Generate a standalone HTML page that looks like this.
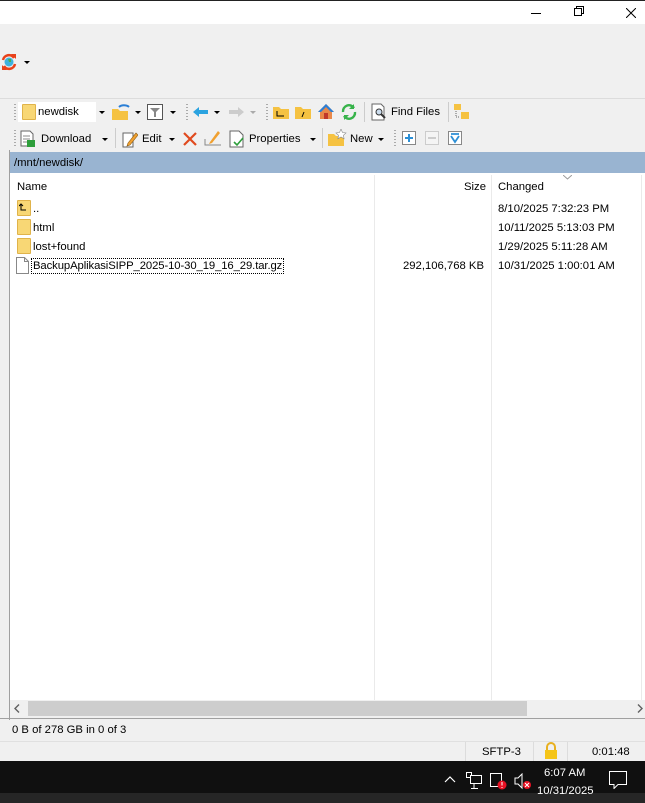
<!DOCTYPE html>
<html><head><meta charset="utf-8"><style>
*{margin:0;padding:0;box-sizing:border-box}
body{width:645px;height:803px;overflow:hidden;background:#f0f0f0;font-family:"Liberation Sans",sans-serif;font-size:11.3px;color:#000;position:relative}
.a{position:absolute}
.t{position:absolute;white-space:nowrap;line-height:14px}
.fold{position:absolute;width:14px;height:16px;background:#f8d775;border:1px solid #e0b34a;border-radius:1px}
.dd{position:absolute;width:0;height:0;border-left:3px solid transparent;border-right:3px solid transparent;border-top:3px solid #000}
.grip{position:absolute;width:2px;background:repeating-linear-gradient(#aaa 0 1px,transparent 1px 3px)}
.sep{position:absolute;width:1px;background:#ccc}
</style></head><body>
<div class="a" style="left:0;top:0;width:645px;height:1px;background:#222"></div>
<div class="a" style="left:0;top:1px;width:645px;height:23px;background:#fff"></div>
<div class="a" style="left:531px;top:13px;width:10px;height:1px;background:#000"></div>
<svg class="a" style="left:574px;top:6px" width="11" height="11"><rect x="0.5" y="2.5" width="7" height="7" fill="#fff" stroke="#000"/><path d="M2.5 2.5V0.5H9.5V7.5H7.5" fill="none" stroke="#000"/></svg>
<svg class="a" style="left:626px;top:8px" width="10" height="10"><path d="M0 0L10 10M10 0L0 10" stroke="#000"/></svg>
<svg class="a" style="left:0px;top:53px" width="18" height="18"><circle cx="9" cy="9" r="4.5" fill="#3db3e0"/><path d="M8 6h3v3h-2z" fill="#4caf50"/><path d="M3 7A6 6 0 0 1 14 5" fill="none" stroke="#e8421b" stroke-width="2.5"/><path d="M15 11A6 6 0 0 1 4 13" fill="none" stroke="#e8421b" stroke-width="2.5"/><path d="M11 1h5v5z M7 17H2v-5z" fill="#e8421b"/></svg>
<div class="dd" style="left:24px;top:61px"></div>
<div class="a" style="left:0;top:98px;width:645px;height:1px;background:#dcdcdc"></div>
<div class="grip" style="left:14px;top:104px;height:16px"></div>
<div class="a" style="left:18px;top:102px;width:90px;height:20px;background:#fff"></div>
<div class="a" style="left:96px;top:102px;width:12px;height:20px;background:#f0f0f0"></div>
<div class="fold" style="left:22px;top:104px"></div>
<div class="t" style="left:38px;top:105px">newdisk</div>
<div class="dd" style="left:99px;top:111px"></div>
<svg class="a" style="left:111px;top:103px" width="20" height="18"><path d="M1 6h6l2 2h8v9H1z" fill="#f5c242"/><path d="M8 4A6 4 0 0 1 18 4" fill="none" stroke="#2b7fd6" stroke-width="2"/></svg>
<div class="dd" style="left:135px;top:111px"></div>
<svg class="a" style="left:147px;top:104px" width="16" height="16"><rect x="0.5" y="0.5" width="15" height="15" fill="#fff" stroke="#555"/><path d="M3 4h10l-4 4v5h-2v-5z" fill="#888"/></svg>
<div class="dd" style="left:170px;top:111px"></div>
<div class="grip" style="left:186px;top:104px;height:16px"></div>
<svg class="a" style="left:193px;top:106px" width="16" height="12"><path d="M0 6l6-5v3h9v4H6v3z" fill="#2ba3e0"/></svg>
<div class="dd" style="left:214px;top:111px"></div>
<svg class="a" style="left:228px;top:106px" width="16" height="12"><path d="M16 6l-6-5v3H1v4h9v3z" fill="#ccc"/></svg>
<div class="dd" style="left:250px;top:111px;border-top-color:#aaa"></div>
<div class="grip" style="left:266px;top:104px;height:16px"></div>
<svg class="a" style="left:272px;top:104px" width="18" height="16"><path d="M1 3h6l2 2h8v10H1z" fill="#f5c242"/><path d="M5 7v5h7" fill="none" stroke="#000"/></svg>
<svg class="a" style="left:294px;top:104px" width="18" height="16"><path d="M1 3h6l2 2h8v10H1z" fill="#f5c242"/><path d="M8 13l2-5" stroke="#000"/></svg>
<svg class="a" style="left:317px;top:103px" width="18" height="17"><path d="M9 1L1 9h2v7h12V9h2z" fill="#e8884a"/><path d="M9 1L1 9h3l5-5 5 5h3z" fill="#2b7fd6"/><rect x="7" y="10" width="4" height="6" fill="#c0392b"/></svg>
<svg class="a" style="left:340px;top:103px" width="18" height="18"><path d="M3 9A6 6 0 0 1 14 5M15 9A6 6 0 0 1 4 13" fill="none" stroke="#37b34a" stroke-width="2.4"/><path d="M14 1v5h-5z" fill="#37b34a"/><path d="M4 17v-5h5z" fill="#37b34a"/></svg>
<div class="sep" style="left:364px;top:102px;height:20px"></div>
<svg class="a" style="left:371px;top:103px" width="16" height="18"><path d="M1 1h9l3 3v13H1z" fill="#fff" stroke="#666"/><circle cx="8" cy="9" r="3" fill="#cde" stroke="#333"/><path d="M10 11l4 4" stroke="#333" stroke-width="2"/></svg>
<div class="t" style="left:391px;top:105px">Find Files</div>
<div class="sep" style="left:448px;top:102px;height:20px"></div>
<svg class="a" style="left:453px;top:103px" width="18" height="18"><rect x="1" y="1" width="7" height="6" fill="#f5c242"/><rect x="8" y="9" width="8" height="7" fill="#f5c242"/><path d="M3 8v6h4" fill="none" stroke="#666" stroke-dasharray="1 1"/></svg>
<div class="grip" style="left:14px;top:130px;height:16px"></div>
<svg class="a" style="left:19px;top:130px" width="18" height="18"><path d="M2 1h9l3 3v12H2z" fill="#fff" stroke="#666"/><path d="M4 6h7M4 9h7M4 12h4" stroke="#888"/><rect x="8" y="10" width="8" height="7" fill="#2e9e3b"/></svg>
<div class="t" style="left:41px;top:132px">Download</div>
<div class="dd" style="left:102px;top:138px"></div>
<div class="sep" style="left:115px;top:128px;height:20px"></div>
<svg class="a" style="left:122px;top:130px" width="16" height="18"><path d="M1 3h10v14H1z" fill="#fff" stroke="#666"/><path d="M6 13l8-10 2 2-8 10-3 1z" fill="#f0a030" stroke="#8a5a10" stroke-width="0.6"/></svg>
<div class="t" style="left:142px;top:132px">Edit</div>
<div class="dd" style="left:169px;top:138px"></div>
<svg class="a" style="left:183px;top:132px" width="14" height="14"><path d="M1 1l12 12M13 1L1 13" stroke="#e04a1e" stroke-width="2.2"/></svg>
<svg class="a" style="left:204px;top:129px" width="18" height="18"><path d="M1 10v6h16" fill="none" stroke="#888"/><path d="M6 13l8-11 2 2-8 10-3 1z" fill="#f0a030"/></svg>
<svg class="a" style="left:229px;top:130px" width="16" height="18"><path d="M1 1h9l4 4v12H1z" fill="#fff" stroke="#666"/><path d="M5 12l3 3 6-7" fill="none" stroke="#2e9e3b" stroke-width="1.6"/></svg>
<div class="t" style="left:249px;top:132px">Properties</div>
<div class="dd" style="left:310px;top:138px"></div>
<div class="sep" style="left:322px;top:128px;height:20px"></div>
<svg class="a" style="left:327px;top:129px" width="20" height="18"><path d="M1 5h6l2 2h8v10H1z" fill="#f5c242"/><path d="M14 0l1.5 3.5 3.5.5-2.6 2.3.7 3.5-3.1-1.8-3.1 1.8.7-3.5L9 4l3.5-.5z" fill="#fff" stroke="#888" stroke-width="0.6"/></svg>
<div class="t" style="left:350px;top:132px">New</div>
<div class="dd" style="left:378px;top:138px"></div>
<div class="grip" style="left:394px;top:130px;height:16px"></div>
<svg class="a" style="left:402px;top:131px" width="14" height="14"><rect x="0.5" y="0.5" width="13" height="13" fill="#fff" stroke="#888"/><path d="M7 3v8M3 7h8" stroke="#2b8fd6" stroke-width="2"/></svg>
<svg class="a" style="left:425px;top:131px" width="14" height="14"><rect x="0.5" y="0.5" width="13" height="13" fill="#f4f4f4" stroke="#ccc"/><path d="M3 7h8" stroke="#ccc" stroke-width="2"/></svg>
<svg class="a" style="left:448px;top:131px" width="14" height="14"><rect x="0.5" y="0.5" width="13" height="13" fill="#fff" stroke="#888"/><path d="M3 3h8M3 5l4 6 4-6" fill="none" stroke="#2b8fd6" stroke-width="1.8"/></svg>
<div class="a" style="left:9px;top:150px;width:1px;height:570px;background:#a0a0a0"></div>
<div class="a" style="left:10px;top:152px;width:635px;height:21px;background:#99b4d1"></div>
<div class="t" style="left:14px;top:156px">/mnt/newdisk/</div>
<div class="a" style="left:10px;top:173px;width:635px;height:527px;background:#fff"></div>
<div class="a" style="left:374px;top:175px;width:1px;height:525px;background:#eaeaea"></div>
<div class="a" style="left:491px;top:175px;width:1px;height:525px;background:#eaeaea"></div>
<div class="a" style="left:641px;top:175px;width:1px;height:525px;background:#eaeaea"></div>
<div class="t" style="left:17px;top:180px">Name</div>
<div class="t" style="right:159px;top:180px">Size</div>
<div class="t" style="left:498px;top:180px">Changed</div>
<svg class="a" style="left:563px;top:175px" width="9" height="5"><path d="M0 0l4.5 4 4.5-4" fill="none" stroke="#999"/></svg>
<div class="fold" style="left:17px;top:200px"></div>
<svg class="a" style="left:19px;top:203px" width="8" height="9"><path d="M2 1v6h5M0 3l2-2 2 2" fill="none" stroke="#000"/></svg>
<div class="t" style="left:33px;top:202px">..</div>
<div class="t" style="left:498px;top:202px">8/10/2025 7:32:23 PM</div>
<div class="fold" style="left:17px;top:219px"></div>
<div class="t" style="left:33px;top:221px">html</div>
<div class="t" style="left:498px;top:221px">10/11/2025 5:13:03 PM</div>
<div class="fold" style="left:17px;top:238px"></div>
<div class="t" style="left:33px;top:240px">lost+found</div>
<div class="t" style="left:498px;top:240px">1/29/2025 5:11:28 AM</div>
<svg class="a" style="left:16px;top:257px" width="13" height="17"><path d="M0.5 0.5h8l4 4v12H0.5z" fill="#fff" stroke="#888"/><path d="M8.5 0.5v4h4" fill="none" stroke="#888"/></svg>
<div class="t" style="left:31px;top:258px;border:1px dotted #000;padding:0 1px;letter-spacing:-0.1px">BackupAplikasiSIPP_2025-10-30_19_16_29.tar.gz</div>
<div class="t" style="right:161px;top:259px">292,106,768 KB</div>
<div class="t" style="left:498px;top:259px">10/31/2025 1:00:01 AM</div>
<div class="a" style="left:10px;top:700px;width:635px;height:17px;background:#f0f0f0"></div>
<div class="a" style="left:28px;top:701px;width:499px;height:15px;background:#cdcdcd"></div>
<svg class="a" style="left:14px;top:704px" width="6" height="9"><path d="M5 0.5L1 4.5l4 4" fill="none" stroke="#606060" stroke-width="1.4"/></svg>
<svg class="a" style="left:637px;top:704px" width="6" height="9"><path d="M1 0.5l4 4-4 4" fill="none" stroke="#606060" stroke-width="1.4"/></svg>
<div class="a" style="left:0;top:718px;width:645px;height:1px;background:#a0a0a0"></div>
<div class="t" style="left:12px;top:723px">0 B of 278 GB in 0 of 3</div>
<div class="a" style="left:0;top:741px;width:645px;height:1px;background:#e0e0e0"></div>
<div class="a" style="left:465px;top:742px;width:1px;height:19px;background:#dcdcdc"></div>
<div class="a" style="left:533px;top:742px;width:1px;height:19px;background:#dcdcdc"></div>
<div class="a" style="left:567px;top:742px;width:1px;height:19px;background:#dcdcdc"></div>
<div class="t" style="left:482px;top:745px">SFTP-3</div>
<svg class="a" style="left:543px;top:742px" width="16" height="18"><path d="M4 8V5a4 4 0 0 1 8 0v3" fill="none" stroke="#e8b020" stroke-width="2"/><rect x="2" y="8" width="12" height="9" fill="#f5c518"/></svg>
<div class="t" style="left:592px;top:745px">0:01:48</div>
<div class="a" style="left:0;top:761px;width:645px;height:42px;background:#101010"></div>
<div class="a" style="left:0;top:793px;width:645px;height:10px;background:#262626"></div>
<svg class="a" style="left:444px;top:775px" width="12" height="8"><path d="M1 7l5-5 5 5" fill="none" stroke="#fff" stroke-width="1.2"/></svg>
<svg class="a" style="left:466px;top:772px" width="16" height="17"><rect x="0.5" y="0.5" width="5" height="5" fill="none" stroke="#fff"/><rect x="4.5" y="3.5" width="11" height="8" fill="#101010" stroke="#fff"/><path d="M8 12v4M5 16.5h7" stroke="#fff"/></svg>
<svg class="a" style="left:490px;top:772px" width="18" height="18"><rect x="0.5" y="1.5" width="11" height="13" fill="none" stroke="#fff"/><circle cx="12" cy="13" r="4.5" fill="#e81123"/><path d="M12 10v3.5M12 15v1" stroke="#fff"/></svg>
<svg class="a" style="left:514px;top:773px" width="18" height="17"><path d="M1 5h3l4-4v14l-4-4H1z" fill="none" stroke="#fff"/><circle cx="13" cy="12" r="4" fill="#e81123"/><path d="M11 10l4 4M15 10l-4 4" stroke="#fff"/></svg>
<div class="t" style="left:544px;top:766px;color:#fff">6:07 AM</div>
<div class="t" style="left:537px;top:784px;color:#fff">10/31/2025</div>
<svg class="a" style="left:609px;top:771px" width="18" height="18"><path d="M0.5 0.5h17v13H9l-4 4v-4H0.5z" fill="none" stroke="#fff"/></svg>
</body></html>
